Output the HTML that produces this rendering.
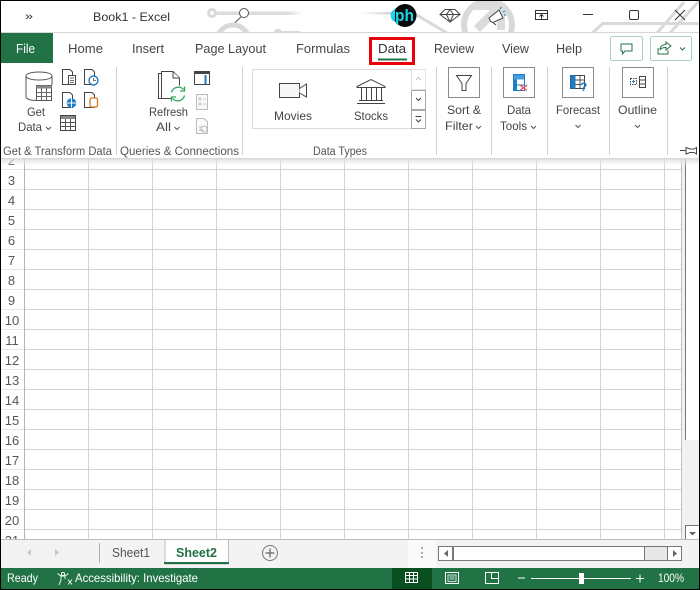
<!DOCTYPE html>
<html lang="en"><head><meta charset="utf-8"><title>Book1 - Excel</title>
<style>
html,body{margin:0;padding:0;background:#fff}
svg{display:block}
text{font-family:"Liberation Sans",sans-serif;fill:#444;font-size:13px}
.s{font-size:12px}
.g{font-size:11.5px;fill:#555}
.r{font-size:13px;fill:#555}
</style></head><body>
<svg xmlns="http://www.w3.org/2000/svg" width="700" height="590" viewBox="0 0 700 590">
<defs>
<linearGradient id="fl" x1="0" x2="1" y1="0" y2="0"><stop offset="0" stop-color="#dcdcdc"/><stop offset=".8" stop-color="#dcdcdc"/><stop offset="1" stop-color="#fff"/></linearGradient>
<linearGradient id="fr" x1="0" x2="1" y1="0" y2="0"><stop offset="0" stop-color="#fff"/><stop offset="1" stop-color="#d0d0d0"/></linearGradient>
<linearGradient id="sh" x1="0" x2="0" y1="0" y2="1"><stop offset="0" stop-color="#d4d4d4"/><stop offset="1" stop-color="#fff" stop-opacity="0"/></linearGradient>
<clipPath id="tc"><rect x="0" y="0" width="700" height="32"/></clipPath>
<clipPath id="gc"><rect x="1" y="158" width="684" height="381"/></clipPath>
</defs>
<rect width="700" height="590" fill="#fff"/>

<!-- title bar decoration -->
<g clip-path="url(#tc)" fill="none" stroke="#d9d9d9">
<circle cx="212" cy="13" r="3.5" stroke-width="3"/>
<rect x="216" y="11.5" width="88" height="3.5" fill="url(#fl)" stroke="none"/>
<circle cx="233" cy="41" r="16" stroke-width="5"/>
<circle cx="278" cy="34" r="3.5" stroke-width="3"/>
<path d="M283 32H300" stroke-width="2"/>
<rect x="360" y="12" width="34" height="2.5" fill="url(#fr)" stroke="none"/>
<path d="M410 11L447 33" stroke-width="3"/>
<circle cx="488" cy="25" r="24" stroke-width="6"/>
<path d="M473 3H505V30H497V15L480 32L474 26L490 10H473Z" fill="#dcdcdc" stroke="none"/>
<path d="M592 33L603 23.5H700" stroke-width="3"/>
<path d="M657 33L684 2M670 33L700 0" stroke-width="3"/>
</g>
<circle cx="244" cy="13" r="4.5" fill="#fff" stroke="#555" stroke-width="1"/>
<path d="M241 17L235 22.5" stroke="#555" stroke-width="1"/>

<text x="25" y="20" textLength="8" lengthAdjust="spacingAndGlyphs" style="font-size:11px;fill:#333">»</text>
<text x="93" y="21" class="s" textLength="77" lengthAdjust="spacingAndGlyphs" style="fill:#333">Book1  -  Excel</text>

<!-- ph logo -->
<circle cx="400" cy="15" r="8" fill="#19d7ea"/>
<circle cx="405" cy="15.5" r="11.5" fill="#0a0a0a"/>
<path d="M392 11A8 8 0 0 0 392 20L395 22V9Z" fill="#19d7ea"/>
<text x="395" y="21" style="font-size:17px;font-weight:bold;fill:#19d7ea" textLength="19" lengthAdjust="spacingAndGlyphs">ph</text>

<!-- diamond -->
<path d="M445 9.5H455L460 14.5L450 22L440 14.5ZM440 14.5H460M446.500 14.5L450 22L453.5 14.5L450 9.5L446.500 14.5" fill="#fff" stroke="#444" stroke-width="1"/>
<!-- megaphone -->
<path d="M489 18L499 10L503 18L493 22.500L490.500 21.500ZM493 22.500L496 25" fill="#fff" stroke="#444" stroke-width="1"/>
<path d="M500 9L501.500 7M503 12L505 11M504 15H506" stroke="#1c8dd6" stroke-width="1.200"/>
<!-- ribbon display -->
<path d="M535.500 10.500H547.500V19.500H535.500ZM535.500 13.500H547.500" fill="none" stroke="#333"/>
<path d="M541.500 19V15M539.500 16.500L541.500 14.500L543.500 16.500" fill="none" stroke="#333"/>
<!-- window controls -->
<path d="M583 14.500H593" stroke="#333"/>
<rect x="629.500" y="10.500" width="9" height="9" rx="1.500" fill="#fff" stroke="#333"/>
<path d="M675 10L685 20M685 10L675 20" stroke="#333"/>

<rect x="1" y="32" width="698" height="1" fill="#d6d6d6"/>

<!-- tabs -->
<rect x="1" y="33" width="52" height="30" fill="#217346"/>
<text x="16" y="53" style="fill:#fff" textLength="19" lengthAdjust="spacingAndGlyphs">File</text>
<text x="68" y="53" textLength="35" lengthAdjust="spacingAndGlyphs">Home</text>
<text x="132" y="53" textLength="32" lengthAdjust="spacingAndGlyphs">Insert</text>
<text x="195" y="53" textLength="71" lengthAdjust="spacingAndGlyphs">Page Layout</text>
<text x="296" y="53" textLength="54" lengthAdjust="spacingAndGlyphs">Formulas</text>
<text x="378" y="53" textLength="28" lengthAdjust="spacingAndGlyphs" style="fill:#333">Data</text>
<text x="434" y="53" textLength="40" lengthAdjust="spacingAndGlyphs">Review</text>
<text x="502" y="53" textLength="27" lengthAdjust="spacingAndGlyphs">View</text>
<text x="556" y="53" textLength="26" lengthAdjust="spacingAndGlyphs">Help</text>
<rect x="378" y="58.500" width="29" height="2" fill="#217346"/>
<rect x="370.500" y="38.500" width="43" height="25" fill="none" stroke="#e8000d" stroke-width="3"/>

<!-- comment / share -->
<rect x="610.500" y="36.500" width="32" height="24" rx="2" fill="#fff" stroke="#a6d0b9"/>
<path d="M621 44H632V51H625L622.500 54V51H621Z" fill="none" stroke="#217346"/>
<rect x="650.500" y="36.500" width="41" height="24" rx="2" fill="#fff" stroke="#a6d0b9"/>
<path d="M658 48V54H668V50M660 50C660 46 663 44.500 666 44.500V42L671 46L666 50V47.500C663 47.500 661 48 660 50Z" fill="none" stroke="#217346"/>
<path d="M680 47.500L682.500 50L685 47.500" fill="none" stroke="#217346"/>

<!-- group separators -->
<g stroke="#d0d0d0"><path d="M116.500 67V155M242.500 67V155M436.500 67V155M491.500 67V155M547.500 67V155M609.500 67V155M667.500 67V155"/></g>

<!-- Get Data -->
<g fill="none" stroke="#555">
<path d="M26 76V97C26 99 31 100.500 36 100.500M52 76V85M26 76C26 73.500 32 72 39 72C46 72 52 73.500 52 76C52 78.500 46 80 39 80C32 80 26 78.500 26 76Z" fill="#fff"/>
</g>
<rect x="36.500" y="85.500" width="15" height="15" fill="#fff" stroke="#555"/>
<rect x="36.500" y="85.500" width="15" height="3" fill="#888"/>
<path d="M41.500 88V100M46.500 88V100M37 92.500H51M37 96.500H51" stroke="#666"/>
<text x="27" y="116" textLength="18" lengthAdjust="spacingAndGlyphs" class="s">Get</text>
<text x="18" y="131" textLength="24" lengthAdjust="spacingAndGlyphs" class="s">Data</text>
<path d="M46 127L48.500 129.500L51 127" fill="none" stroke="#555"/>

<!-- small doc icons -->
<g fill="#fff" stroke="#444">
<path d="M62.500 69.500H70L72.500 72V84.500H62.500Z"/>
<rect x="68.500" y="75.500" width="7" height="9"/>
<path d="M70 78H74M70 80.500H74M70 82.500H74" stroke-width=".8"/>
<path d="M84.500 69.500H92L94.500 72V84.500H84.500Z"/>
<path d="M62.500 92.500H70L72.500 95V107.500H62.500Z"/>
<path d="M84.500 92.500H92L94.500 95V107.500H84.500Z"/>
</g>
<circle cx="93.500" cy="80.500" r="4.500" fill="#fff" stroke="#1c7ec9" stroke-width="1.400"/>
<path d="M93.500 78V80.500H96" fill="none" stroke="#444" stroke-width=".8"/>
<circle cx="71.500" cy="103" r="4.800" fill="#1c7ec9"/>
<path d="M67 103H76M71.500 98.500V107.500" stroke="#fff"/>
<path d="M90 99V106C90 107.500 97.500 107.500 97.500 106V99C97.500 97.500 90 97.500 90 99Z" fill="#fff" stroke="#d9781f" stroke-width="1.300"/>
<path d="M60.500 115.500H75.500V130.500H60.500Z" fill="#fff" stroke="#444"/>
<rect x="61" y="116" width="14" height="3" fill="#888"/>
<path d="M65.500 119V130M70.500 119V130M61 122.500H75M61 126.500H75" stroke="#555"/>

<!-- Refresh -->
<g fill="#fff" stroke="#444">
<path d="M158.500 73.500H172V98.500H158.500Z"/>
<path d="M161.500 71.500H173L179.500 78V98.500H161.500Z"/>
<path d="M173 72V78H179.500"/>
</g>
<circle cx="178" cy="94" r="8.500" fill="#fff"/>
<path d="M171.500 92.500A7 7 0 0 1 183.500 89.500M184.500 95.500A7 7 0 0 1 172.500 98.500" fill="none" stroke="#2fa35d" stroke-width="1.300"/>
<path d="M184.500 86.500V91H180M171.500 101.500V97H176" fill="none" stroke="#2fa35d" stroke-width="1.300"/>
<text x="149" y="116" textLength="39" lengthAdjust="spacingAndGlyphs" class="s">Refresh</text>
<text x="156" y="131" textLength="15" lengthAdjust="spacingAndGlyphs" class="s">All</text>
<path d="M174.500 127L177 129.500L179.500 127" fill="none" stroke="#555"/>
<rect x="194.500" y="71.500" width="15" height="13" fill="#fff" stroke="#444"/>
<rect x="195" y="72" width="14" height="2" fill="#444"/>
<path d="M205.500 75V84" stroke="#1c7ec9" stroke-width="2"/>
<rect x="196.500" y="94.500" width="11" height="15" fill="#fafafa" stroke="#bbb"/>
<path d="M199 98H201V100H199ZM199 103H201V105H199ZM203 99H206M203 104H206" fill="none" stroke="#bbb" stroke-width=".8"/>
<path d="M196.500 118.500H204L207.500 122V133.500H196.500Z" fill="#fafafa" stroke="#bbb"/>
<circle cx="204" cy="129" r="3" fill="#fff" stroke="#bbb"/>
<path d="M199 127H203M199 130H204" stroke="#bbb"/>

<!-- gallery -->
<rect x="252.500" y="69.500" width="173" height="59" fill="#fff" stroke="#dcdcdc"/>
<rect x="411.500" y="69.500" width="14" height="20" fill="#fff" stroke="#e2e2e2"/>
<rect x="411.500" y="90.500" width="14" height="19" fill="#fff" stroke="#a8a8a8"/>
<rect x="411.500" y="110.500" width="14" height="18" fill="#fff" stroke="#a8a8a8"/>
<path d="M416 80L418.500 77.500L421 80" fill="none" stroke="#c4c4c4"/>
<path d="M416 98L418.500 100.500L421 98" fill="none" stroke="#444"/>
<path d="M415.500 116.500H421.500M416 119.500L418.500 122L421 119.500" fill="none" stroke="#444"/>
<rect x="279.500" y="83.500" width="20" height="14" fill="#f7f7f7" stroke="#444"/>
<path d="M299.500 88.500L306.500 84V97L299.500 93" fill="#fff" stroke="#444"/>
<text x="274" y="120" textLength="38" lengthAdjust="spacingAndGlyphs" class="s">Movies</text>
<path d="M357 86.500L371 79.500L385 86.500V87.500H357Z" fill="#fff" stroke="#444"/>
<path d="M361.500 88V100M366.500 88V100M371.500 88V100M376.500 88V100M381.500 88V100M359 100.500H383M357 103.500H385" fill="none" stroke="#444"/>
<text x="354" y="120" textLength="34" lengthAdjust="spacingAndGlyphs" class="s">Stocks</text>
<text x="313" y="155" textLength="54" lengthAdjust="spacingAndGlyphs" class="g">Data Types</text>

<!-- Sort & Filter -->
<rect x="448.500" y="67.500" width="31" height="30" fill="#fff" stroke="#8a8a8a"/>
<path d="M456.500 75.500H471.500L466 83.500V90.500H462V83.500Z" fill="#fff" stroke="#444"/>
<text x="447" y="114" textLength="34" lengthAdjust="spacingAndGlyphs" class="s">Sort &amp;</text>
<text x="445" y="130" textLength="28" lengthAdjust="spacingAndGlyphs" class="s">Filter</text>
<path d="M476 126L478.500 128.500L481 126" fill="none" stroke="#555"/>

<!-- Data Tools -->
<rect x="503.500" y="67.500" width="31" height="30" fill="#fff" stroke="#8a8a8a"/>
<rect x="513.500" y="74.500" width="11" height="16" fill="#fff" stroke="#1c7ec9"/>
<rect x="514" y="75" width="10" height="4.500" fill="#4a9ddc"/>
<path d="M514 85H524" stroke="#1c7ec9"/>
<rect x="514" y="79.500" width="3" height="11" fill="#1c7ec9"/>
<path d="M520 85L527 90.500M527 85L520 90.500" stroke="#e8505b" stroke-width="1.300"/>
<text x="507" y="114" textLength="24" lengthAdjust="spacingAndGlyphs" class="s">Data</text>
<text x="500" y="130" textLength="27" lengthAdjust="spacingAndGlyphs" class="s">Tools</text>
<path d="M531 126L533.500 128.500L536 126" fill="none" stroke="#555"/>

<!-- Forecast -->
<rect x="562.500" y="67.500" width="31" height="30" fill="#fff" stroke="#8a8a8a"/>
<rect x="570.500" y="75.500" width="14" height="13" fill="#fff" stroke="#444"/>
<rect x="570.500" y="75.500" width="5" height="13" fill="#1c7ec9"/>
<path d="M575 80H585M575 84.500H581M580 76V88" stroke="#555"/>
<text x="580" y="91" style="font-size:12px;font-weight:bold;fill:#1c7ec9">?</text>
<text x="556" y="114" textLength="44" lengthAdjust="spacingAndGlyphs" class="s">Forecast</text>
<path d="M575.500 125L578 127.500L580.500 125" fill="none" stroke="#555"/>

<!-- Outline -->
<rect x="622.500" y="67.500" width="31" height="30" fill="#fff" stroke="#8a8a8a"/>
<rect x="630.500" y="78.500" width="6" height="6" fill="#fff" stroke="#444" stroke-dasharray="1.500 1"/>
<path d="M632 81.500H635M633.500 80V83" stroke="#1c7ec9"/>
<rect x="639.500" y="76.500" width="6" height="11" fill="#fff" stroke="#444"/>
<path d="M640 80H645M640 84H645" stroke="#444"/>
<text x="618" y="114" textLength="39" lengthAdjust="spacingAndGlyphs" class="s">Outline</text>
<path d="M635 125L637.500 127.500L640 125" fill="none" stroke="#555"/>

<text x="3" y="155" textLength="109" lengthAdjust="spacingAndGlyphs" class="g">Get &amp; Transform Data</text>
<text x="120" y="155" textLength="119" lengthAdjust="spacingAndGlyphs" class="g">Queries &amp; Connections</text>

<!-- pin -->
<path d="M680 150.500H686M686 147.500L690 149H694L696.500 147.500V154L694 152.500H690L686 154Z" fill="#fff" stroke="#444"/>

<!-- grid -->
<rect x="1" y="159" width="698" height="380" fill="#fff"/>
<g clip-path="url(#gc)">
<g stroke="#d4d4d4">
<path d="M88.500 158V539M152.500 158V539M216.500 158V539M280.500 158V539M344.500 158V539M408.500 158V539M472.500 158V539M536.500 158V539M600.500 158V539M664.500 158V539"/>
<path d="M25 169.500H682M25 189.500H682M25 209.500H682M25 229.500H682M25 249.500H682M25 269.500H682M25 289.500H682M25 309.500H682M25 329.500H682M25 349.500H682M25 369.500H682M25 389.500H682M25 409.500H682M25 429.500H682M25 449.500H682M25 469.500H682M25 489.500H682M25 509.500H682M25 529.500H682"/>
</g>
<path d="M1 169.500H24M1 189.500H24M1 209.500H24M1 229.500H24M1 249.500H24M1 269.500H24M1 289.500H24M1 309.500H24M1 329.500H24M1 349.500H24M1 369.500H24M1 389.500H24M1 409.500H24M1 429.500H24M1 449.500H24M1 469.500H24M1 489.500H24M1 509.500H24M1 529.500H24" stroke="#e6e6e6"/>
<rect x="24" y="158" width="1" height="381" fill="#b4b4b4"/>
<rect x="681" y="158" width="1" height="381" fill="#c0c0c0"/>
<g class="r" text-anchor="middle">
<text class="r" x="11.500" y="165">2</text><text class="r" x="11.500" y="185">3</text><text class="r" x="11.500" y="205">4</text><text class="r" x="11.500" y="225">5</text><text class="r" x="11.500" y="245">6</text><text class="r" x="11.500" y="265">7</text><text class="r" x="11.500" y="285">8</text><text class="r" x="11.500" y="305">9</text>
<text class="r" x="12" y="325">10</text><text class="r" x="12" y="345">11</text><text class="r" x="12" y="365">12</text><text class="r" x="12" y="385">13</text><text class="r" x="12" y="405">14</text><text class="r" x="12" y="425">15</text><text class="r" x="12" y="445">16</text><text class="r" x="12" y="465">17</text><text class="r" x="12" y="485">18</text><text class="r" x="12" y="505">19</text><text class="r" x="12" y="525">20</text><text class="r" x="12" y="545">21</text>
</g>
</g>

<!-- vertical scrollbar -->
<rect x="682" y="158" width="17" height="381" fill="#f1f1f1"/>
<rect x="685" y="158" width="14" height="282" fill="#fff"/>
<rect x="685" y="158" width="1" height="282" fill="#777"/>
<rect x="685.500" y="525.500" width="14" height="14" fill="#fff" stroke="#777"/>
<path d="M689 532H696L692.500 535.500Z" fill="#666"/>

<!-- ribbon shadow -->
<rect x="1" y="158" width="698" height="9" fill="url(#sh)"/>

<!-- sheet tab bar -->
<rect x="1" y="539" width="698" height="29" fill="#f3f3f3"/>
<rect x="1" y="539" width="698" height="1" fill="#bdbdbd"/>
<path d="M31 549V556L27 552.500Z" fill="#c8c8c8"/>
<path d="M55 549V556L59 552.500Z" fill="#c8c8c8"/>
<rect x="99" y="543" width="1" height="20" fill="#b0b0b0"/>
<text x="112" y="557" textLength="38" lengthAdjust="spacingAndGlyphs" style="fill:#555">Sheet1</text>
<path d="M165 564V539.500H228.500V564Z" fill="#fff" stroke="#bdbdbd"/>
<rect x="164" y="562" width="65" height="2" fill="#217346"/>
<text x="176" y="557" textLength="41" lengthAdjust="spacingAndGlyphs" style="fill:#217346;font-weight:bold">Sheet2</text>
<circle cx="270" cy="553" r="7.500" fill="#f3f3f3" stroke="#777"/>
<path d="M265.500 553H274.500M270 548.500V557.500" stroke="#666" stroke-width="1.200"/>

<rect x="408" y="540" width="28" height="28" fill="#fafafa"/>
<rect x="421" y="547" width="2" height="2" fill="#aaa"/><rect x="421" y="552" width="2" height="2" fill="#aaa"/><rect x="421" y="556" width="2" height="2" fill="#aaa"/>

<rect x="438.500" y="546.500" width="243" height="14" fill="#e8e8e8" stroke="#777"/>
<rect x="438.500" y="546.500" width="14" height="14" fill="#fff" stroke="#777"/>
<rect x="453.500" y="546.500" width="191" height="14" fill="#fff" stroke="#777"/>
<rect x="667.500" y="546.500" width="14" height="14" fill="#fff" stroke="#777"/>
<path d="M448 550V557L444 553.500Z" fill="#666"/>
<path d="M673 550V557L677 553.500Z" fill="#666"/>

<!-- status bar -->
<rect x="1" y="568" width="698" height="21" fill="#217346"/>
<text x="7" y="582" class="s" textLength="31" lengthAdjust="spacingAndGlyphs" style="fill:#fff">Ready</text>
<g fill="none" stroke="#fff" stroke-width=".9">
<circle cx="63" cy="574" r="1.600"/>
<path d="M57.500 573.500L61 576H65L68.500 573.500M61 576V580L59 585M65 576V579M68 579.500L72 584.500M72 579.500L68 584.500"/>
</g>
<text x="75" y="582" class="s" textLength="123" lengthAdjust="spacingAndGlyphs" style="fill:#fff">Accessibility: Investigate</text>
<rect x="392" y="568" width="40" height="21" fill="#0a4f1f"/>
<path d="M405.500 572.500H417.500V582.500H405.500ZM409.500 572.500V582.500M413.500 572.500V582.500M405.500 575.500H417.500M405.500 579H417.500" fill="none" stroke="#fff"/>
<rect x="445.500" y="572.500" width="13" height="11" fill="none" stroke="#fff"/>
<path d="M448 575H456V581.500H448ZM449.500 577H454.500M449.500 579H454.500" fill="none" stroke="#fff" stroke-width=".8"/>
<path d="M485.500 572.500H498.500V583.500H485.500ZM491.500 572.500V578.500H498.500" fill="none" stroke="#fff"/>
<rect x="518" y="577.500" width="7" height="1" fill="#fff"/>
<rect x="531" y="578" width="100" height="1" fill="#fff"/>
<rect x="579" y="573" width="5" height="11" fill="#fff"/>
<path d="M636 578.500H644M640 574.500V582.500" stroke="#fff"/>
<text x="658" y="582" class="s" textLength="26" lengthAdjust="spacingAndGlyphs" style="fill:#fff">100%</text>

<!-- window border -->
<rect x="0" y="0" width="700" height="1" fill="#000"/>
<rect x="0" y="0" width="1" height="590" fill="#000"/>
<rect x="699" y="0" width="1" height="590" fill="#000"/>
<rect x="0" y="589" width="700" height="1" fill="#000"/>
</svg>
</body></html>
